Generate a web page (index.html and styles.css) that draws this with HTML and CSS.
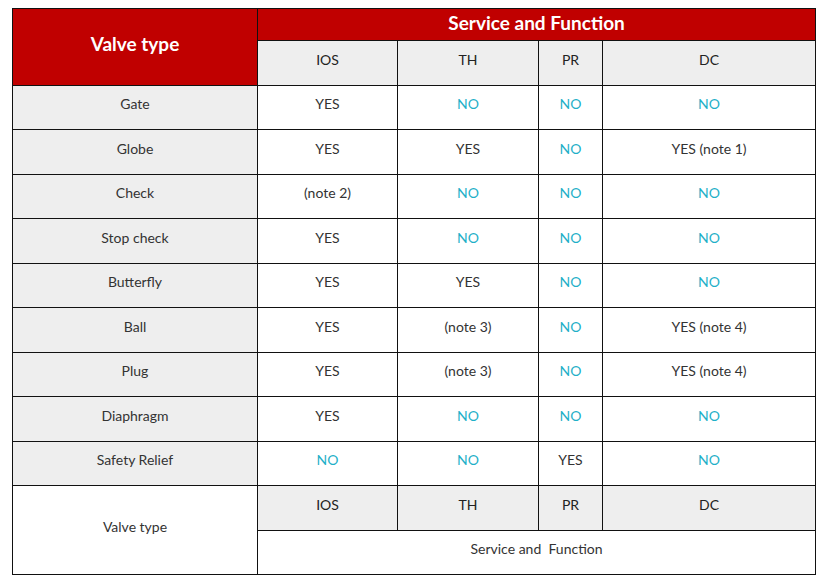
FILE: index.html
```html
<!DOCTYPE html>
<html>
<head>
<meta charset="utf-8">
<link rel="stylesheet" href="styles.css">
</head>
<body>
<table class="valves">
  <colgroup>
    <col class="c-type"><col class="c-ios"><col class="c-th"><col class="c-pr"><col class="c-dc">
  </colgroup>
  <thead>
    <tr class="r-top">
      <th class="head-red big" rowspan="2">Valve type</th>
      <th class="head-red" colspan="4">Service and Function</th>
    </tr>
    <tr class="r-row">
      <th class="sub">IOS</th><th class="sub">TH</th><th class="sub">PR</th><th class="sub">DC</th>
    </tr>
  </thead>
  <tbody>
    <tr class="r-row"><td class="name">Gate</td><td>YES</td><td class="no">NO</td><td class="no">NO</td><td class="no">NO</td></tr>
    <tr class="r-row"><td class="name">Globe</td><td>YES</td><td>YES</td><td class="no">NO</td><td>YES (note 1)</td></tr>
    <tr class="r-row"><td class="name">Check</td><td>(note 2)</td><td class="no">NO</td><td class="no">NO</td><td class="no">NO</td></tr>
    <tr class="r-row"><td class="name">Stop check</td><td>YES</td><td class="no">NO</td><td class="no">NO</td><td class="no">NO</td></tr>
    <tr class="r-row"><td class="name">Butterfly</td><td>YES</td><td>YES</td><td class="no">NO</td><td class="no">NO</td></tr>
    <tr class="r-row"><td class="name">Ball</td><td>YES</td><td>(note 3)</td><td class="no">NO</td><td>YES (note 4)</td></tr>
    <tr class="r-row"><td class="name">Plug</td><td>YES</td><td>(note 3)</td><td class="no">NO</td><td>YES (note 4)</td></tr>
    <tr class="r-row"><td class="name">Diaphragm</td><td>YES</td><td class="no">NO</td><td class="no">NO</td><td class="no">NO</td></tr>
    <tr class="r-row"><td class="name">Safety Relief</td><td class="no">NO</td><td class="no">NO</td><td>YES</td><td class="no">NO</td></tr>
  </tbody>
  <tfoot>
    <tr class="r-row">
      <td class="foot-type" rowspan="2">Valve type</td>
      <td class="sub">IOS</td><td class="sub">TH</td><td class="sub">PR</td><td class="sub">DC</td>
    </tr>
    <tr class="r-row">
      <td colspan="4">Service and&nbsp; Function</td>
    </tr>
  </tfoot>
</table>
</body>
</html>
```

FILE: styles.css
```css
html, body {
  margin: 0;
  padding: 0;
  background: #fff;
}
body {
  padding: 8px 0 0 12px;
  font-family: Lato, "Liberation Sans", sans-serif;
  font-size: 14px;
  color: #333;
}
.valves {
  border-collapse: collapse;
  table-layout: fixed;
  width: 803px;
}
.c-type { width: 245px; }
.c-ios { width: 140px; }
.c-th { width: 141px; }
.c-pr { width: 64px; }
.c-dc { width: 213px; }
.valves th, .valves td {
  border: 1px solid #111;
  text-align: center;
  vertical-align: middle;
  padding: 0 0 7px 0;
  font-weight: normal;
  background: #fff;
}
.r-top { height: 32px; }
.r-row { height: 44.5px; }
.valves .head-red {
  background: #c00000;
  color: #fff;
  font-weight: bold;
  font-size: 19px;
  padding-bottom: 5px;
}
.valves .head-red.big {
  font-size: 19px;
  padding-bottom: 6px;
}
.valves .sub {
  background: #eeeeee;
  color: #222;
}
.valves .name {
  background: #eeeeee;
}
.valves .no {
  color: #1fb0c8;
}
.valves .foot-type {
  background: #fff;
}
```
